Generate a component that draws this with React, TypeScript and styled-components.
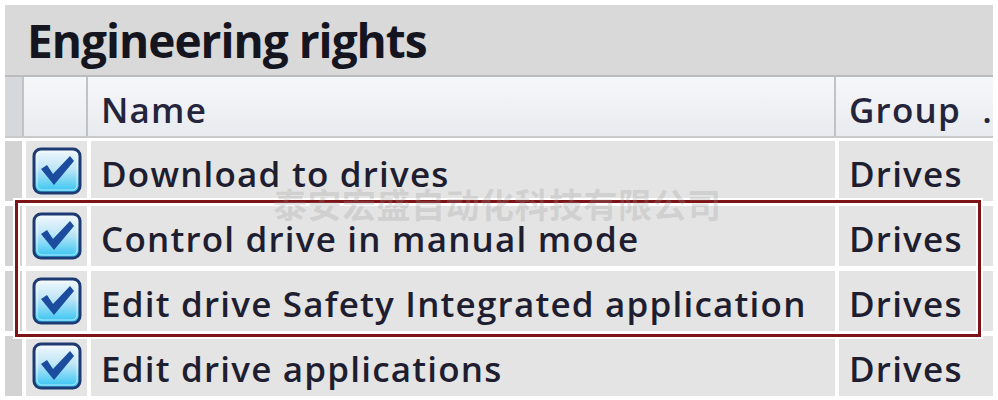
import React from "react";
import styled, { createGlobalStyle } from "styled-components";

const GlobalStyle = createGlobalStyle`
  html, body {
    margin: 0;
    padding: 0;
    background: #ffffff;
  }
  body {
    font-family: "Open Sans", "Noto Sans", sans-serif;
    color: #1c1c26;
  }
`;

const Page = styled.div`
  width: 998px;
  height: 400px;
  padding: 5px 5px 0 5px;
  box-sizing: border-box;
  overflow: hidden;
`;

const Panel = styled.div`
  position: relative;
  width: 988px;
`;

const TitleBar = styled.div`
  height: 70px;
  background: #d9d9d9;
  border-bottom: 2px solid #bcbcbc;
  display: flex;
  align-items: center;
  padding-left: 22px;
  font-size: 46px;
  font-weight: 700;
  letter-spacing: -1px;
  color: #15151f;
`;

const HeaderRow = styled.div`
  display: grid;
  grid-template-columns: 17px 64px 748px 1fr;
  height: 59px;
  background: linear-gradient(#f6f7f9, #e8ebef);
  border-bottom: 2px solid #c9c9c9;
`;

const HeaderCell = styled.div<{ $first?: boolean }>`
  display: flex;
  align-items: center;
  padding: 6px 0 0 13px;
  font-size: 35px;
  font-weight: 600;
  letter-spacing: 1.2px;
  color: #24243a;
  border-left: ${(p) => (p.$first ? "none" : "2px solid #bfc3c8")};
  background: ${(p) => (p.$first ? "#d6d8db" : "transparent")};
  white-space: nowrap;
  overflow: hidden;
`;

const Dot = styled.span`
  margin-left: auto;
  margin-right: 0;
`;

const Body = styled.div`
  display: flex;
  flex-direction: column;
  gap: 5px;
  padding-top: 3px;
`;

const Row = styled.div`
  display: grid;
  grid-template-columns: 17px 61px 744px 1fr;
  column-gap: 4px;
  height: 60px;
`;

const Cell = styled.div<{ $kind?: "sel" | "check" | "text" }>`
  display: flex;
  align-items: center;
  justify-content: ${(p) => (p.$kind === "check" ? "center" : "flex-start")};
  padding-left: ${(p) => (p.$kind === "text" ? "10px" : "0")};
  padding-top: ${(p) => (p.$kind === "text" ? "4px" : "0")};
  background: ${(p) => (p.$kind === "sel" ? "#d3d3d3" : "#e4e4e4")};
  font-size: 35px;
  font-weight: 600;
  letter-spacing: 1.2px;
  color: #1e1e30;
  white-space: nowrap;
  overflow: hidden;
`;

const Highlight = styled.div`
  position: absolute;
  left: 10px;
  top: 195px;
  width: 966px;
  height: 137px;
  box-sizing: border-box;
  border: 3px solid #7d1518;
  box-shadow: 0 0 0 2px #ffffff, inset 0 0 0 2px #ffffff;
  pointer-events: none;
`;

const Watermark = styled.div`
  position: absolute;
  left: 268px;
  top: 174px;
  font-family: "Noto Sans CJK SC", sans-serif;
  font-weight: 700;
  font-size: 34px;
  letter-spacing: 0.5px;
  color: rgba(150, 150, 150, 0.26);
  pointer-events: none;
`;

const CheckBox: React.FC = () => (
  <svg width="50" height="48" viewBox="0 0 50 48">
    <defs>
      <linearGradient id="cbFill" x1="0" y1="0" x2="0" y2="1">
        <stop offset="0" stopColor="#f2f8fc" />
        <stop offset="0.45" stopColor="#bfe6f7" />
        <stop offset="1" stopColor="#2ec3f2" />
      </linearGradient>
    </defs>
    <rect x="2" y="2" width="46" height="44" rx="7" fill="url(#cbFill)" stroke="#1d3b72" strokeWidth="3" />
    <rect x="5" y="5" width="40" height="38" rx="5" fill="none" stroke="#ffffff" strokeOpacity="0.6" strokeWidth="1" />
    <path d="M9 22 L15 18 L21 27 L38 9 L42 14 L22 38 Z" fill="#1b4c9e" />
  </svg>
);

const rows = [
  "Download to drives",
  "Control drive in manual mode",
  "Edit drive Safety Integrated application",
  "Edit drive applications",
];

export default function App() {
  return (
    <>
      <GlobalStyle />
      <Page>
        <Panel>
          <TitleBar>Engineering rights</TitleBar>
          <HeaderRow>
            <HeaderCell $first />
            <HeaderCell />
            <HeaderCell>Name</HeaderCell>
            <HeaderCell>
              Group
              <Dot>.</Dot>
            </HeaderCell>
          </HeaderRow>
          <Body>
            {rows.map((name) => (
              <Row key={name}>
                <Cell $kind="sel" />
                <Cell $kind="check">
                  <CheckBox />
                </Cell>
                <Cell $kind="text">{name}</Cell>
                <Cell $kind="text">Drives</Cell>
              </Row>
            ))}
          </Body>
          <Highlight />
          <Watermark>泰安宏盛自动化科技有限公司</Watermark>
        </Panel>
      </Page>
    </>
  );
}
